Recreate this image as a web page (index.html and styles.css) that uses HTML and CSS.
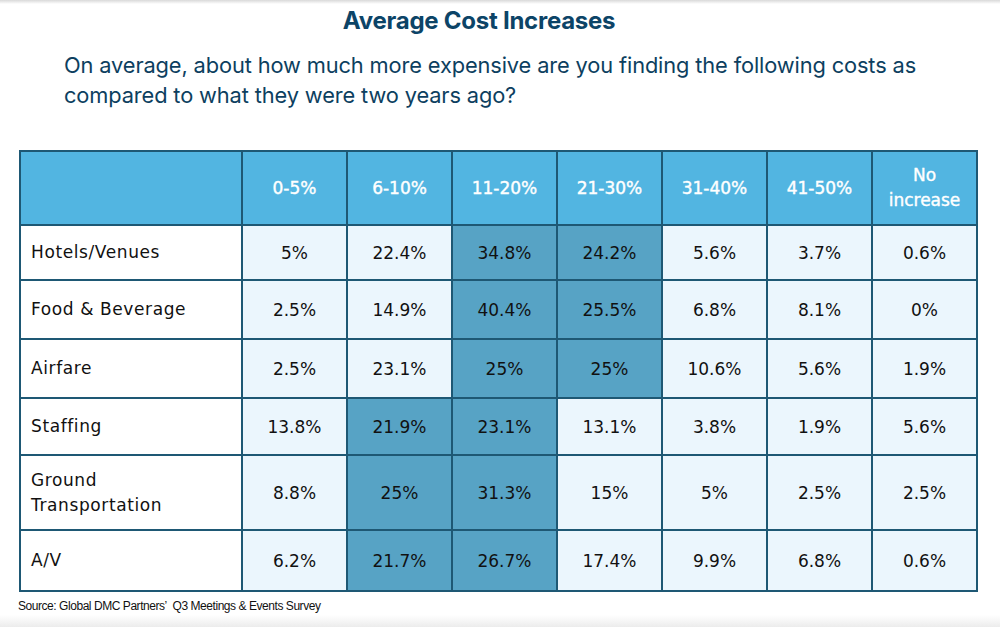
FILE: index.html
```html
<!DOCTYPE html>
<html>
<head>
<meta charset="utf-8">
<link rel="stylesheet" href="styles.css">
</head>
<body>
<div class="page">
  <div class="topshade"></div>
  <h1 class="title">Average Cost Increases</h1>
  <p class="question">On average, about how much more expensive are you finding the following costs as compared to what they were two years ago?</p>
  <table class="grid">
    <colgroup>
      <col class="c-label"><col class="c-val"><col class="c-val"><col class="c-val"><col class="c-val"><col class="c-val"><col class="c-val"><col class="c-val">
    </colgroup>
    <thead>
      <tr class="head">
        <th></th><th>0-5%</th><th>6-10%</th><th>11-20%</th><th>21-30%</th><th>31-40%</th><th>41-50%</th><th>No<br>increase</th>
      </tr>
    </thead>
    <tbody>
      <tr class="r1">
        <td class="label">Hotels/Venues</td><td>5%</td><td>22.4%</td><td class="hi">34.8%</td><td class="hi">24.2%</td><td>5.6%</td><td>3.7%</td><td>0.6%</td>
      </tr>
      <tr class="r2">
        <td class="label">Food &amp; Beverage</td><td>2.5%</td><td>14.9%</td><td class="hi">40.4%</td><td class="hi">25.5%</td><td>6.8%</td><td>8.1%</td><td>0%</td>
      </tr>
      <tr class="r3">
        <td class="label">Airfare</td><td>2.5%</td><td>23.1%</td><td class="hi">25%</td><td class="hi">25%</td><td>10.6%</td><td>5.6%</td><td>1.9%</td>
      </tr>
      <tr class="r4">
        <td class="label">Staffing</td><td>13.8%</td><td class="hi">21.9%</td><td class="hi">23.1%</td><td>13.1%</td><td>3.8%</td><td>1.9%</td><td>5.6%</td>
      </tr>
      <tr class="r5">
        <td class="label">Ground<br>Transportation</td><td>8.8%</td><td class="hi">25%</td><td class="hi">31.3%</td><td>15%</td><td>5%</td><td>2.5%</td><td>2.5%</td>
      </tr>
      <tr class="r6">
        <td class="label">A/V</td><td>6.2%</td><td class="hi">21.7%</td><td class="hi">26.7%</td><td>17.4%</td><td>9.9%</td><td>6.8%</td><td>0.6%</td>
      </tr>
    </tbody>
  </table>
  <p class="source">Source: Global DMC Partners’&nbsp; Q3 Meetings &amp; Events Survey</p>
  <div class="bottomshade"></div>
</div>
</body>
</html>
```
FILE: styles.css
```css
html, body {
  margin: 0;
  padding: 0;
  background: #ffffff;
}
.page {
  position: relative;
  width: 1000px;
  height: 627px;
  overflow: hidden;
}
.topshade {
  position: absolute;
  left: 0; top: 0; right: 0;
  height: 4px;
  background: linear-gradient(#d9d9d9, rgba(255,255,255,0));
}
.bottomshade {
  position: absolute;
  left: 0; bottom: 0; right: 0;
  height: 12px;
  background: linear-gradient(rgba(240,240,240,0), #ececec);
}
.title {
  margin: 0;
  padding: 6px 42px 0 0;
  height: 30px;
  text-align: center;
  font-family: "Inter", "Noto Sans", sans-serif;
  font-weight: 700;
  font-size: 24px;
  line-height: 30px;
  color: #0c4467;
  letter-spacing: -0.25px;
}
.question {
  margin: 14px 0 0 64px;
  width: 900px;
  font-family: "Inter", "Noto Sans", sans-serif;
  font-size: 21.8px;
  line-height: 30px;
  color: #0d3f5f;
  letter-spacing: -0.12px;
}
.grid {
  margin: 40px 0 0 19px;
  border-collapse: collapse;
  table-layout: fixed;
  width: 958px;
  font-family: "DejaVu Sans", "Open Sans", sans-serif;
  font-size: 17px;
  color: #111;
  border: 2px solid #1e5874;
}
.c-label { width: 222px; }
.c-val { width: 105px; }
.grid th, .grid td {
  border: 2px solid #1e5874;
  text-align: center;
  padding: 0;
}
.head th {
  background: #52b5e1;
  color: #ffffff;
  font-weight: 400;
  height: 72px;
  line-height: 25px;
  -webkit-text-stroke: 0.4px #ffffff;
}
.grid td {
  background: #ebf6fd;
}
.grid td.label {
  background: #ffffff;
  text-align: left;
  padding-left: 10px;
  line-height: 25px;
  letter-spacing: 0.6px;
}
.grid td.hi {
  background: #57a3c5;
}
.r1 td { height: 53px; }
.r2 td { height: 57px; }
.r3 td { height: 57px; }
.r4 td { height: 55px; }
.r5 td { height: 73px; }
.r6 td { height: 59px; }
.source {
  margin: 7px 0 0 18px;
  font-family: "Liberation Sans Narrow", "Liberation Sans", sans-serif;
  font-size: 12px;
  color: #111;
  letter-spacing: -0.45px;
}
```
